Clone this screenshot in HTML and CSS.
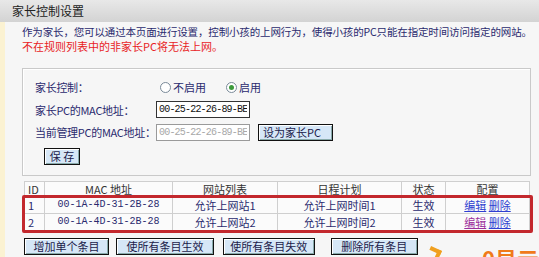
FILE: index.html
```html
<!DOCTYPE html>
<html lang="zh-CN">
<head>
    <meta charset="UTF-8">
    <title>家长控制设置</title>
    <link rel="stylesheet" href="styles.css">
</head>
<body>
    <div class="page">
        <div class="titre">家长控制设置</div>

        <div class="contenu">
            <p class="info">作为家长，您可以通过本页面进行设置，控制小孩的上网行为，使得小孩的PC只能在指定时间访问指定的网站。</p>
            <p class="alerte">不在规则列表中的非家长PC将无法上网。</p>

            <!-- Réglages -->
            <div class="cadre">
                <div class="ligne">
                    <span class="etiquette">家长控制：</span>
                    <label class="choix"><span class="radio"></span>不启用</label>
                    <label class="choix"><span class="radio coche"></span>启用</label>
                </div>
                <div class="ligne">
                    <span class="etiquette">家长PC的MAC地址：</span>
                    <input class="champ" type="text" value="00-25-22-26-89-BE">
                </div>
                <div class="ligne">
                    <span class="etiquette">当前管理PC的MAC地址：</span>
                    <input class="champ" type="text" value="00-25-22-26-89-BE" disabled>
                    <button class="btn btn-pc">设为家长PC</button>
                </div>
                <div class="ligne">
                    <button class="btn btn-save">保 存</button>
                </div>
            </div>

            <!-- Règles -->
            <div class="regles">
                <table class="tableau">
                    <tr>
                        <th class="c-id">ID</th>
                        <th class="c-mac">MAC 地址</th>
                        <th class="c-site">网站列表</th>
                        <th class="c-plan">日程计划</th>
                        <th class="c-etat">状态</th>
                        <th>配置</th>
                    </tr>
                    <tr>
                        <td class="c-id">1</td>
                        <td>00-1A-4D-31-2B-28</td>
                        <td>允许上网站1</td>
                        <td>允许上网时间1</td>
                        <td>生效</td>
                        <td><a href="#">编辑</a> <a href="#">删除</a></td>
                    </tr>
                    <tr>
                        <td class="c-id">2</td>
                        <td>00-1A-4D-31-2B-28</td>
                        <td>允许上网站2</td>
                        <td>允许上网时间2</td>
                        <td>生效</td>
                        <td><a href="#" class="vu">编辑</a> <a href="#">删除</a></td>
                    </tr>
                </table>
                <div class="surligne"></div>
            </div>

            <div class="actions">
                <button class="btn btn-a1">增加单个条目</button>
                <button class="btn btn-a2">使所有条目生效</button>
                <button class="btn btn-a3">使所有条目失效</button>
                <button class="btn btn-a4">删除所有条目</button>
                <span class="fleche"></span>
                <span class="note">--0显示</span>
            </div>
        </div>
    </div>
</body>
</html>
```

FILE: styles.css
```css
* { box-sizing: border-box; margin: 0; padding: 0; }
body {
    font-family: "Noto Sans CJK SC", "Liberation Sans", sans-serif;
    font-size: 11px;
    color: #2a2a6e;
    background-color: #f6f6f6;
    width: 539px;
    height: 257px;
    overflow: hidden;
}

.page { height: 257px; border-left: 5px solid #fbf2d2; }
.titre { margin-left: -5px; height: 22px; line-height: 22px; padding-left: 12px; font-size: 12px; color: #222; background: linear-gradient(#e8e8e8, #d3d3d3); }
.contenu { padding: 3px 0 0 17px; }
.info, .alerte { height: 14px; line-height: 14px; white-space: nowrap; }
.info { font-size: 10.5px; letter-spacing: -0.15px; }
.alerte { color: #e8231f; }

.cadre { margin-top: 15px; width: 509px; height: 108px; border: 1px solid #c9c9c9; box-shadow: inset 1px 1px 0 #fff; padding: 7px 0 0 12px; }
.ligne { display: flex; align-items: center; height: 22.5px; white-space: nowrap; }
.etiquette { width: 121px; letter-spacing: -0.3px; }
.choix { display: flex; align-items: center; margin-right: 16px; }
.radio { width: 11px; height: 11px; border: 1px solid #7a8a99; border-radius: 50%; background: #fff; margin: 0 2px 0 4px; position: relative; }
.radio.coche::after { content: ""; position: absolute; left: 2px; top: 2px; width: 5px; height: 5px; border-radius: 50%; background: #3c9a3c; }
.champ { width: 94px; height: 17px; border: 1px solid #333; background: #fff; font-family: "Liberation Mono", monospace; font-size: 10px; letter-spacing: -0.8px; padding: 0 2px; color: #111; }
.champ:disabled { border-color: #9a9a9a; color: #a8a8a8; background: #fff; }

.btn { height: 17px; font-family: inherit; font-size: 11px; line-height: 13px; white-space: nowrap; color: #1b1b4a; background: #d6e7f7; border: 1px solid #111; box-shadow: inset 1px 1px 0 #fff, inset -1px -1px 0 #8aa; padding: 0; }
.btn-pc { width: 75px; margin-left: 8px; text-align: left; padding-left: 4px; }
.btn-save { width: 36px; margin-left: 9px; margin-top: 3px; }

.regles { position: relative; margin-top: 5px; width: 506px; margin-left: 2px; }
.tableau { width: 506px; border-collapse: collapse; background: #fbfbfb; table-layout: fixed; }
.tableau th, .tableau td { border: 1px solid #cfcfcf; text-align: center; font-weight: normal; height: 17px; line-height: 14px; padding: 0; white-space: nowrap; }
.tableau th { color: #333; height: 15px; }
.tableau .c-id { width: 20px; text-align: left; padding-left: 3px; }
.c-mac { width: 128px; }
.c-site { width: 105px; }
.c-plan { width: 124px; }
.c-etat { width: 44px; }
.tableau td:nth-child(2) { font-family: "Liberation Mono", monospace; font-size: 10px; }
.tableau a { color: #2f3fd0; }
.tableau a.vu { color: #9c2f9c; }
.surligne { position: absolute; left: -2px; top: 14px; width: 511px; height: 38px; border: 3px solid #c3282d; border-radius: 2px; }

.actions { display: flex; align-items: flex-start; margin-top: 7px; margin-left: 2px; }
.btn-a1 { width: 86px; }
.btn-a2 { width: 99px; margin-left: 7px; }
.btn-a3 { width: 93px; margin-left: 9px; }
.btn-a4 { width: 88px; margin-left: 16px; }
.fleche { width: 12px; height: 12px; margin: 10px 0 0 10px; border-top: 4px solid #f0a020; border-right: 4px solid #f0a020; transform: rotate(25deg); }
.note { margin: 9px 0 0 26px; font-size: 22px; font-weight: bold; color: #f07a1a; line-height: 22px; white-space: nowrap; }
```
